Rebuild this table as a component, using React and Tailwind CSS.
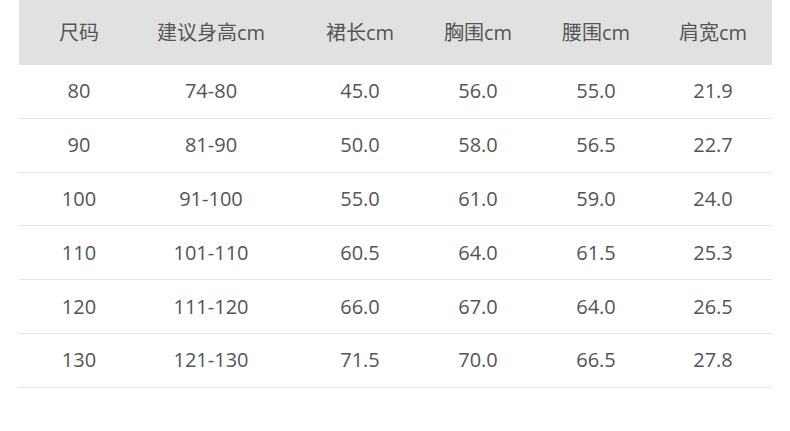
const headers = ["尺码", "建议身高cm", "裙长cm", "胸围cm", "腰围cm", "肩宽cm"];

const rows = [
  ["80", "74-80", "45.0", "56.0", "55.0", "21.9"],
  ["90", "81-90", "50.0", "58.0", "56.5", "22.7"],
  ["100", "91-100", "55.0", "61.0", "59.0", "24.0"],
  ["110", "101-110", "60.5", "64.0", "61.5", "25.3"],
  ["120", "111-120", "66.0", "67.0", "64.0", "26.5"],
  ["130", "121-130", "71.5", "70.0", "66.5", "27.8"],
];

const cols = "grid grid-cols-[120px_144px_154px_82px_154px_99px]";

export default function App() {
  return (
    <div
      className="w-[790px] h-[431px] bg-white text-[#555] text-[20px]"
      style={{ fontFamily: '"Open Sans", "Noto Sans CJK SC", sans-serif' }}
    >
      <div className="ml-[19px] w-[753px]">
        {/* header */}
        <div className={`${cols} h-[65px] items-center bg-[#e1e1e1]`}>
          {headers.map((h, i) => (
            <div key={h} className={`text-center ${i === 5 ? "pr-[19px]" : ""}`}>
              {h}
            </div>
          ))}
        </div>

        {/* rows */}
        {rows.map((r) => (
          <div key={r[0]} className={`${cols} h-[53.8px] items-center border-b border-[#e6e6e6]`}>
            {r.map((v, i) => (
              <div key={i} className={`text-center ${i === 5 ? "pr-[19px]" : ""}`}>
                {v}
              </div>
            ))}
          </div>
        ))}
      </div>
    </div>
  );
}
